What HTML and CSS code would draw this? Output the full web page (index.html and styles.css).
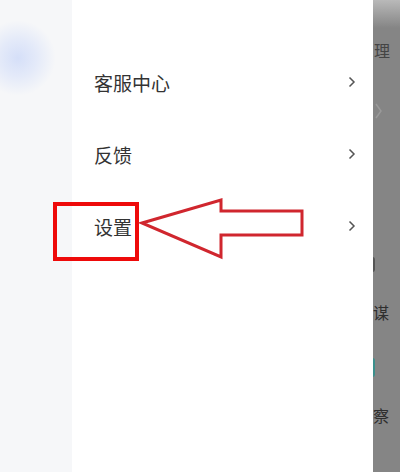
FILE: index.html
```html
<!DOCTYPE html>
<html>
  <head>
    <title>设置</title>
    <meta charset="UTF-8" />
    <link rel="stylesheet" href="styles.css">
  </head>

  <body>
    <div class="screen">
      <div class="side">
        <div class="avatarGlow"></div>
      </div>

      <div class="drawer">
        <div class="menu">
          <div class="row">
            <span class="label">客服中心</span>
            <svg class="chev" width="8" height="12" viewBox="0 0 8 12"><path d="M1.5 1.5 L6 6 L1.5 10.5" /></svg>
          </div>
          <div class="row">
            <span class="label">反馈</span>
            <svg class="chev" width="8" height="12" viewBox="0 0 8 12"><path d="M1.5 1.5 L6 6 L1.5 10.5" /></svg>
          </div>
          <div class="row">
            <span class="label">设置</span>
            <svg class="chev" width="8" height="12" viewBox="0 0 8 12"><path d="M1.5 1.5 L6 6 L1.5 10.5" /></svg>
          </div>
        </div>
      </div>

      <div class="shade">
        <span class="peek t1">理</span>
        <svg class="peekChev" width="8" height="16" viewBox="0 0 8 16"><path d="M1 1 L6 8 L1 15" /></svg>
        <span class="peekDot dark"></span>
        <span class="peek t2">谋</span>
        <span class="peekDot teal"></span>
        <span class="peek t3">察</span>
      </div>

      <div class="markBox"></div>
      <svg class="markArrow" width="400" height="472" viewBox="0 0 400 472">
        <polygon points="142,223 221,200 221,211 302,211 302,235 221,235 221,257" />
      </svg>
    </div>
  </body>
</html>
```

FILE: styles.css
```css
html * {
  margin: 0;
  padding: 0;
}

body {
  font-family: "Noto Sans CJK SC", "Noto Sans", sans-serif;
  background: #fff;
}

.screen {
  position: relative;
  width: 400px;
  height: 472px;
  display: flex;
  overflow: hidden;
}

.side {
  width: 72px;
  background-color: #f6f7f9;
  position: relative;
}

.avatarGlow {
  position: absolute;
  left: -20px;
  top: 20px;
  width: 76px;
  height: 76px;
  border-radius: 50%;
  background: radial-gradient(circle, #d5dff8 0%, #e4eaf9 35%, rgba(246, 247, 249, 0) 70%);
}

.drawer {
  width: 301px;
  background-color: #fff;
}

.menu {
  padding-top: 46px;
}

.row {
  height: 72px;
  display: flex;
  align-items: center;
  justify-content: space-between;
  padding: 0 17px 0 22px;
}

.label {
  font-size: 19px;
  color: #333;
}

.chev path {
  fill: none;
  stroke: #555;
  stroke-width: 1.5;
}

.shade {
  width: 27px;
  background: linear-gradient(to bottom, #b9b9b9 0px, #858585 28px, #858585 100%);
  position: relative;
  overflow: hidden;
}

.peek {
  position: absolute;
  left: 1px;
  font-size: 16px;
  line-height: 16px;
  color: #2e2e2e;
}

.t1 {
  top: 42px;
  color: #444;
}

.t2 {
  top: 304px;
  left: 0;
}

.t3 {
  top: 407px;
  left: 0;
}

.peekChev {
  position: absolute;
  left: 2px;
  top: 103px;
}

.peekChev path {
  fill: none;
  stroke: #9a9a9a;
  stroke-width: 1.5;
}

.peekDot {
  position: absolute;
  left: -3px;
  width: 5px;
  border-radius: 3px;
}

.dark {
  top: 257px;
  height: 15px;
  background-color: #555;
}

.teal {
  top: 358px;
  height: 19px;
  background-color: #3b8f8c;
}

.markBox {
  position: absolute;
  left: 53px;
  top: 202px;
  width: 78px;
  height: 51px;
  border: 4px solid #ee0a0a;
}

.markArrow {
  position: absolute;
  left: 0;
  top: 0;
}

.markArrow polygon {
  fill: none;
  stroke: #d0262e;
  stroke-width: 3;
  stroke-linejoin: miter;
}
```
